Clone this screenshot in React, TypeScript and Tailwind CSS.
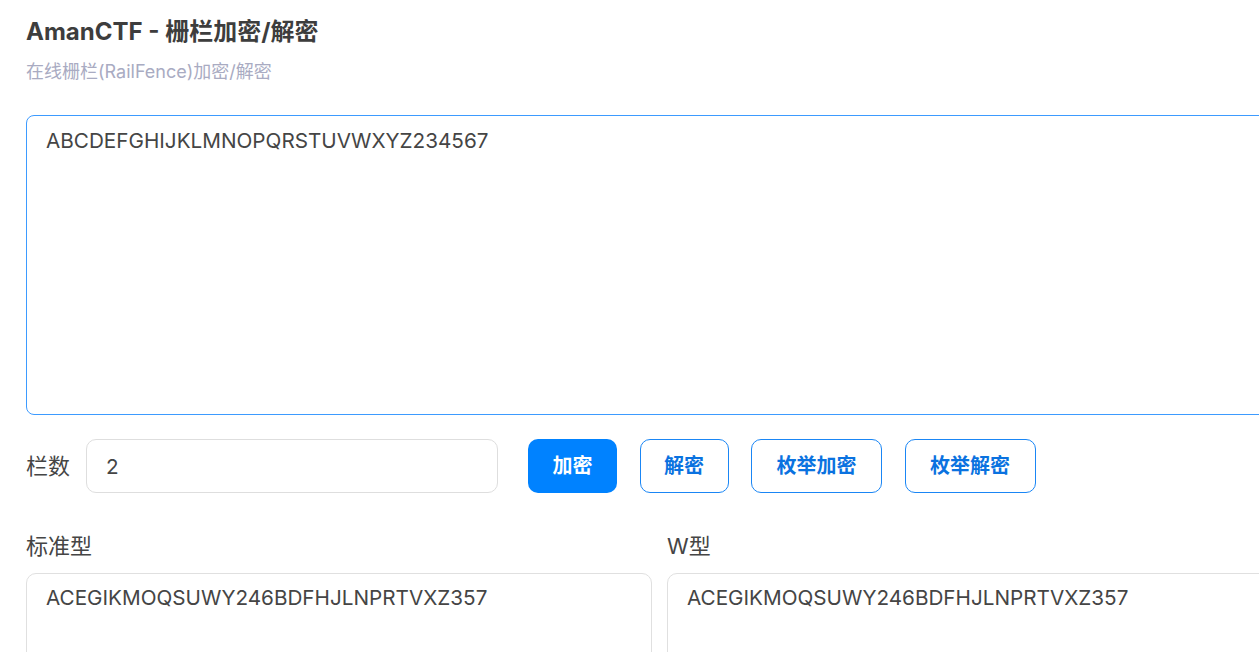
import React, { useEffect, useRef, useState } from 'react';

const FONT = "font-['Inter','Noto_Sans_CJK_SC',sans-serif]";

function railFence(text: string, rails: number): string {
  if (rails < 2) return text;
  const rows: string[] = Array.from({ length: rails }, () => '');
  for (let i = 0; i < text.length; i++) rows[i % rails] += text[i];
  return rows.join('');
}

function railFenceW(text: string, rails: number): string {
  if (rails < 2) return text;
  const rows: string[] = Array.from({ length: rails }, () => '');
  let r = 0;
  let dir = 1;
  for (const ch of text) {
    rows[r] += ch;
    if (r === 0) dir = 1;
    else if (r === rails - 1) dir = -1;
    r += dir;
  }
  return rows.join('');
}

export default function App() {
  const [input, setInput] = useState('ABCDEFGHIJKLMNOPQRSTUVWXYZ234567');
  const [rails, setRails] = useState('2');
  const inputRef = useRef<HTMLTextAreaElement>(null);
  const n = parseInt(rails, 10) || 2;

  useEffect(() => {
    // put the caret at the end of the text, like the user just typed it
    const el = inputRef.current;
    if (el) {
      el.focus();
      el.setSelectionRange(el.value.length, el.value.length);
    }
  }, []);

  return (
    <div className={`w-full h-screen overflow-hidden bg-white ${FONT}`}>
      <div className="w-[1319px] px-[26px] pt-[17px]">
        {/* Header */}
        <h1 className="text-[24px] leading-[30px] font-bold text-[#3d3d3d]">AmanCTF - 栅栏加密/解密</h1>
        <p className="mt-[13px] text-[18px] leading-[24px] text-[#a9abc2]">在线栅栏(RailFence)加密/解密</p>

        {/* Input */}
        <textarea
          ref={inputRef}
          value={input}
          onChange={(e) => setInput(e.target.value)}
          className="mt-[31px] block w-full h-[300px] resize-none rounded-[8px] border border-[#3d9bff] px-[19px] py-[11px] text-[20.7px] leading-[28px] text-[#454545] outline-none caret-[#333]"
        />

        {/* Controls */}
        <div className="mt-[24px] flex items-center h-[54px]">
          <span className="text-[22px] text-[#454545] mr-[16px]">栏数</span>
          <input
            value={rails}
            onChange={(e) => setRails(e.target.value)}
            className="w-[412px] h-[54px] rounded-[10px] border border-[#dedede] px-[19px] text-[20.7px] text-[#454545] outline-none"
          />
          <div className="ml-[30px] flex items-center gap-[22.5px]">
            <button className="w-[89px] h-[54px] rounded-[10px] bg-[#0082ff] text-white text-[20px] font-bold">加密</button>
            <button className="w-[89px] h-[54px] rounded-[10px] border border-[#1a86f5] text-[#0a72e0] text-[20px] font-bold">解密</button>
            <button className="w-[131px] h-[54px] rounded-[10px] border border-[#1a86f5] text-[#0a72e0] text-[20px] font-bold">枚举加密</button>
            <button className="w-[131px] h-[54px] rounded-[10px] border border-[#1a86f5] text-[#0a72e0] text-[20px] font-bold">枚举解密</button>
          </div>
        </div>

        {/* Results */}
        <div className="mt-[38px] grid grid-cols-2 gap-[15px]">
          <div>
            <div className="text-[22px] leading-[30px] text-[#454545]">标准型</div>
            <textarea
              readOnly
              value={railFence(input, n)}
              className="mt-[12px] block w-full h-[200px] resize-none rounded-[10px] border border-[#e0e0e0] px-[19px] py-[10px] text-[20.7px] leading-[28px] text-[#454545] outline-none"
            />
          </div>
          <div>
            <div className="text-[22px] leading-[30px] text-[#454545]">W型</div>
            <textarea
              readOnly
              value={railFenceW(input, n)}
              className="mt-[12px] block w-full h-[200px] resize-none rounded-[10px] border border-[#e0e0e0] px-[19px] py-[10px] text-[20.7px] leading-[28px] text-[#454545] outline-none"
            />
          </div>
        </div>
      </div>
    </div>
  );
}
